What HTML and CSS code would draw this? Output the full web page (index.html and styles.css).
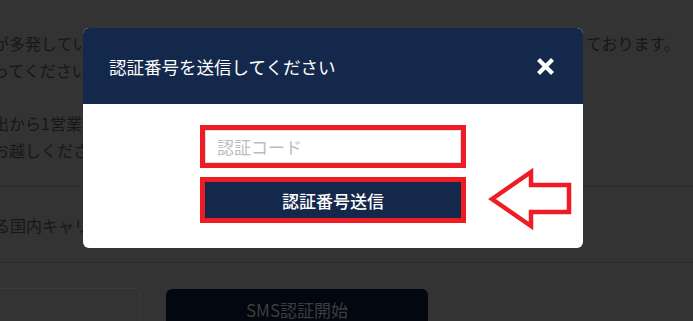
FILE: index.html
```html
<!DOCTYPE html>
<html lang="ja">
<head>
<meta charset="utf-8">
<link rel="stylesheet" href="styles.css">
</head>
<body>
<div class="page">
  <div class="notice">
    <p class="para">
      <span class="row"><span class="lead">が多発しています</span><span class="tail">ております。</span></span>
      <span class="row"><span class="lead">ってください。</span></span>
    </p>
    <p class="para">
      <span class="row"><span class="lead">出から1営業日以内</span></span>
      <span class="row"><span class="lead">お越しください。</span></span>
    </p>
  </div>
  <div class="section">
    <span class="lead">る国内キャリアの携帯電話</span>
  </div>
  <div class="form">
    <div class="phone"></div>
    <div class="sms">SMS認証開始</div>
  </div>
</div>

<div class="modal">
  <div class="modal-head">
    <span class="modal-title">認証番号を送信してください</span>
    <svg class="close" width="17" height="17" viewBox="0 0 17 17">
      <path d="M3 3 L14 14 M14 3 L3 14" stroke="#fff" stroke-width="4.2" stroke-linecap="square" fill="none"/>
    </svg>
  </div>
  <div class="modal-body">
    <input class="code" type="text" placeholder="認証コード">
    <button class="send" type="button">認証番号送信</button>
  </div>
  <svg class="arrow" width="92" height="70" viewBox="0 0 92 70">
    <polygon points="7,34 46,7 46,20 84,20 84,47 46,47 46,61" fill="none" stroke="#ee1c25" stroke-width="4.5" stroke-linejoin="miter"/>
  </svg>
</div>
</body>
</html>
```
FILE: styles.css
```css
* { box-sizing: border-box; }
html, body {
  margin: 0;
  padding: 0;
  background: #333333;
  overflow: hidden;
  font-family: "Noto Sans CJK JP", "Noto Sans", sans-serif;
}
.page {
  width: 693px;
  height: 321px;
  overflow: hidden;
  color: #171717;
  font-size: 16px;
  line-height: 27px;
}
.notice {
  padding-top: 30px;
  padding-bottom: 22px;
  border-bottom: 1px solid #2b2b2b;
}
.para {
  margin: 0;
}
.para + .para {
  margin-top: 26px;
}
.row {
  display: flex;
  white-space: nowrap;
}
.lead {
  margin-left: -7px;
  white-space: nowrap;
}
.tail {
  margin-left: auto;
  padding-right: 13px;
}
.section {
  padding-top: 25px;
  padding-bottom: 23px;
  border-bottom: 1px solid #2b2b2b;
  white-space: nowrap;
}
.section .lead { display: block; margin-left: -6px; }
.form {
  display: flex;
  align-items: flex-start;
  padding-top: 25px;
  gap: 26px;
}
.phone {
  width: 150px;
  height: 46px;
  margin-left: -10px;
  border: 1px solid #3b3b3b;
  border-radius: 5px;
}
.sms {
  width: 262px;
  height: 46px;
  margin-top: 1px;
  background: #03070f;
  border-radius: 6px;
  color: #3d3d3d;
  font-size: 17px;
  text-align: center;
  padding-top: 7px;
  line-height: 27px;
}
.modal {
  position: fixed;
  left: 83px;
  top: 28px;
  width: 500px;
  background: #fff;
  border-radius: 6px;
}
.modal-head {
  height: 76px;
  background: #14284b;
  border-radius: 6px 6px 0 0;
  display: flex;
  align-items: center;
  justify-content: space-between;
  padding: 0 29px 0 26px;
}
.modal-title {
  color: #fff;
  font-size: 17.5px;
  line-height: 24px;
  padding-top: 1px;
}
.close {
  display: block;
  margin-top: 1px;
}
.modal-body {
  display: flex;
  flex-direction: column;
  align-items: center;
  padding: 26px 0 30px;
  gap: 19px;
}
.code {
  width: 256px;
  height: 33px;
  margin: 0;
  border: 1px solid #dddddd;
  padding: 0 11px;
  font-family: "Noto Sans CJK JP", "Noto Sans", sans-serif;
  font-size: 17px;
  color: #333;
  outline: 5px solid #ee1c25;
  background: #fff;
}
.code::placeholder {
  color: #bdbdbd;
}
.send {
  width: 256px;
  height: 36px;
  margin: 0;
  border: none;
  background: #14284b;
  color: #fff;
  font-family: "Noto Sans CJK JP", "Noto Sans", sans-serif;
  font-size: 17px;
  font-weight: 500;
  outline: 5px solid #ee1c25;
  padding: 0;
}
.arrow {
  position: absolute;
  left: 402px;
  top: 137px;
}
```
